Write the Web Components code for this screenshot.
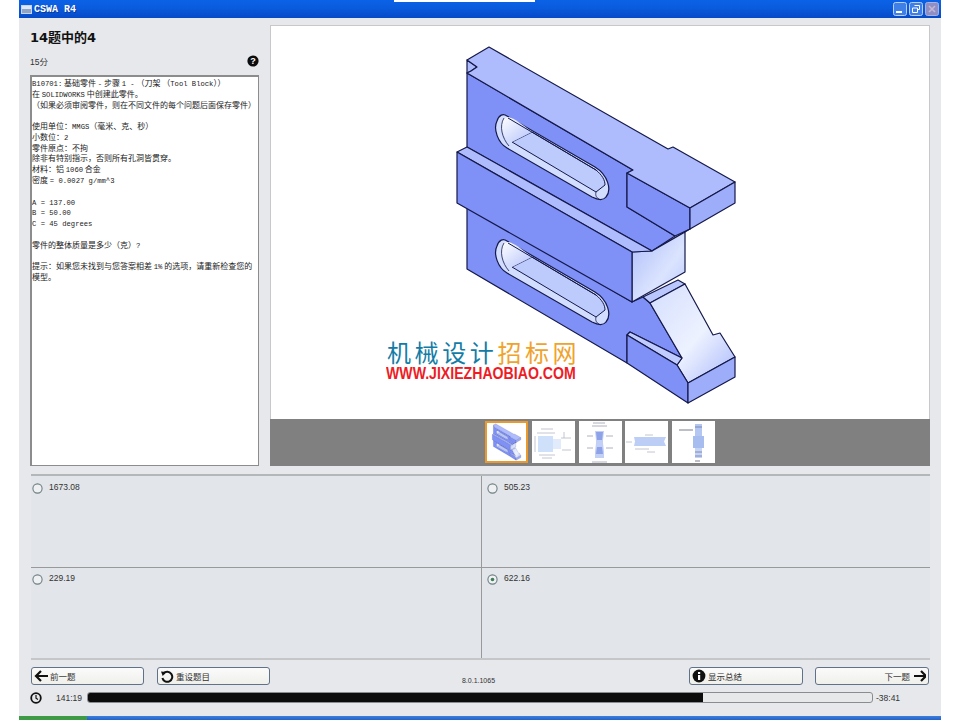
<!DOCTYPE html>
<html lang="zh">
<head>
<meta charset="utf-8">
<title>CSWA R4</title>
<style>
  html, body { margin: 0; padding: 0; background: #fff; }
</style>
</head>
<body>
<cswa-window>
  <cswa-titlebar slot="title">CSWA R4</cswa-titlebar>
  <cswa-question slot="question" heading="14题中的4" points="15分">
<div><i>B10701:</i> 基础零件 <i>-</i> 步骤 <i>1 -</i> （刀架 （<i>Tool Block</i>））</div>
<div>在 <i>SOLIDWORKS</i> 中创建此零件。</div>
<div>（如果必须审阅零件，则在不同文件的每个问题后面保存零件）</div>
<div>&nbsp;</div>
<div>使用单位：<i>MMGS</i>（毫米、克、秒）</div>
<div>小数位：<i>2</i></div>
<div>零件原点：不拘</div>
<div>除非有特别指示，否则所有孔洞皆贯穿。</div>
<div>材料：铝 <i>1060</i> 合金</div>
<div>密度 <i>= 0.0027 g/mm^3</i></div>
<div>&nbsp;</div>
<div><i>A = 137.00</i></div>
<div><i>B = 50.00</i></div>
<div><i>C = 45 degrees</i></div>
<div>&nbsp;</div>
<div>零件的整体质量是多少（克）<i>?</i></div>
<div>&nbsp;</div>
<div>提示：如果您未找到与您答案相差 <i>1%</i> 的选项，请重新检查您的</div>
<div>模型。</div>
  </cswa-question>
  <cswa-viewer slot="viewer"></cswa-viewer>
  <cswa-answers slot="answers">
    <cswa-option>1673.08</cswa-option>
    <cswa-option>505.23</cswa-option>
    <cswa-option>229.19</cswa-option>
    <cswa-option checked>622.16</cswa-option>
  </cswa-answers>
  <cswa-footer slot="footer">
    <cswa-button icon="back">前一题</cswa-button>
    <cswa-button icon="reset">重设题目</cswa-button>
    <span slot="version">8.0.1.1065</span>
    <cswa-button slot="right" icon="info">显示总结</cswa-button>
    <cswa-button slot="right" icon="next" trailing>下一题</cswa-button>
  </cswa-footer>
  <cswa-timer slot="timer" elapsed="141:19" left="-38:41" percent="78.4"></cswa-timer>
</cswa-window>

<script>
const cjk = '"Noto Sans CJK SC", sans-serif';

function slot(p) {
  return `<path d="M507 116 L595 167 C608 175 612 190 606 197 C603 201 598 200 592 197 L507 148 C498 143 493 129 497 121 C499 115 503 113 507 116Z" fill="#d3ddfd" stroke="#14194a" stroke-width="1.2"/>
    <path d="M512 142 L532 132 L596 170 C602 175 605 180 605 185 L596 192Z" fill="#bdcafc" stroke="#14194a" stroke-width="1"/>
    <path d="M504 118 C499 124 501 138 512 142 L532 132 C523 125 514 118 509 117Z" fill="url(#${p}g2)"/>
    <path d="M508 118 L596 170" fill="none" stroke="#14194a" stroke-width="1"/>
    <path d="M504 118 C499 126 502 138 509 146" fill="none" stroke="#14194a" stroke-width=".8"/>
    <path d="M596 192 C595 196 597 198 599 199" fill="none" stroke="#14194a" stroke-width=".8"/>`;
}

// the tool block, drawn in page coordinates
function part(p, viewBox) {
  return `<svg viewBox="${viewBox}" xmlns="http://www.w3.org/2000/svg" stroke-linejoin="round">
    <defs>
      <linearGradient id="${p}g1" x1="0" y1="0" x2="1" y2="1"><stop offset="0" stop-color="#aebcfb"/><stop offset=".6" stop-color="#dbe4fe"/><stop offset="1" stop-color="#b9c6fc"/></linearGradient>
      <linearGradient id="${p}g2" x1="0" y1="0" x2="1" y2="1"><stop offset="0" stop-color="#fff"/><stop offset="1" stop-color="#b5c3fb"/></linearGradient>
      <linearGradient id="${p}bg2" x1="0" y1="0" x2="1" y2="1"><stop offset="0" stop-color="#fff"/><stop offset="1" stop-color="#b5c3fb"/></linearGradient>
      <linearGradient id="${p}g3" x1="0" y1="0" x2="1" y2="1"><stop offset="0" stop-color="#d4defe"/><stop offset=".55" stop-color="#edf2ff"/><stop offset="1" stop-color="#a9b8fb"/></linearGradient>
    </defs>
    <g stroke="#14194a" stroke-width="1.2">
      <polygon points="467,205 632,302 643,297 650,303 682,358 630,332 627,335 627,363 467,269" fill="#7f90f6"/>
      <polygon points="643,297 678,280 685,284 650,303" fill="#b9c7fd"/>
      <polygon points="650,303 685,284 713,335 720,333 735,357 688,383 677,365 682,358" fill="url(#${p}g3)"/>
      <polygon points="630,332 682,358 677,365 627,335" fill="#c0ccfd"/>
      <polygon points="627,335 677,365 688,383 688,403 627,363" fill="#7f90f6"/>
      <polygon points="688,383 735,357 735,377 688,403" fill="#9eadfa"/>
      <polygon points="467,73 633,170 627,173 627,207 675,236 652,251 467,147" fill="#7f90f6"/>
      <polygon points="627,173 690,208 690,229 675,236 627,207" fill="#7f90f6"/>
      <polygon points="467,60 467,73 471,71 477,67" fill="#aebcfd"/>
      <polygon points="467,60 489,47 668,149 673,147 735,182 690,208 627,173 633,170 467,73 471,71 477,67" fill="#aebcfd"/>
      <polygon points="690,208 735,182 735,203 690,229" fill="#9eadfa"/>
      <polygon points="690,229 652,251 685,232" fill="#7f90f6"/>
      <polygon points="632,252 652,251 685,232 685,272 632,302" fill="url(#${p}g1)"/>
      <polygon points="457,152 467,147 652,251 632,252" fill="#aebcfd"/>
      <polygon points="457,152 632,252 632,302 457,203" fill="#7f90f6"/>
    </g>
    ${slot(p)}
    <g transform="translate(0 125)">${slot(p + "b")}</g>
  </svg>`;
}

const dim = 'fill="none" stroke="#b4b8c6" stroke-width=".8"';
const drawings = [
  `<rect x="6" y="15" width="15" height="16" fill="#cfe0fb"/><path d="M21 18h8v10h-8z" fill="#e2ebfc"/>
   <path d="M5 12h18M9 8h12M7 34h16M10 37h10M29 17h10M30 29h9M32 11v6M3 15v16" ${dim}/>`,
  `<path d="M16 10h9l-1 9v3l1 9v6h-9v-6l1-9v-3l-1-9z" fill="#c2cff6"/><path d="M17 11h7l-1 8h-5zM18 26h5l1 7h-7z" fill="#8ea2e8"/>
   <path d="M14 2h12M13 5h15M8 15h6M27 15h7M8 27h6M27 27h7M13 41h15" fill="none" stroke="#9ca0b0" stroke-width=".8"/>`,
  `<path d="M9 16h32l-2 4.500 2 4.500H9l1-4.500z" fill="#bccdf6"/>
   <path d="M1 21h6M20 14h8M10 28h14M22 31h8" ${dim}/>`,
  `<rect x="23" y="3" width="7" height="12" fill="#b4c6f2"/><rect x="21" y="15" width="11" height="12" fill="#a7bcef"/><rect x="23" y="27" width="7" height="10" fill="#c5d3f6"/>
   <path d="M23 6h7M23 31h7M23 35h7" stroke="#6f7aa0" stroke-width=".8" fill="none"/>
   <path d="M7 9h14M23 40h5" stroke="#7c7f8e" stroke-width="1.100" fill="none"/>`
];

class CswaWindow extends HTMLElement {
  connectedCallback() {
    const root = this.attachShadow({ mode: "open" });
    root.innerHTML = `
      <style>
        :host { display: block; width: 922px; height: 720px; margin-left: 19px; position: relative; }
        .frame { display: flex; flex-direction: column; height: 720px; background: #e6e8eb; }
        .top { display: flex; gap: 11px; padding: 7px 11px 0; height: 441px; }
        .notch { position: absolute; left: 375px; top: 0; width: 141px; height: 2px; background: #fff; }
        .task { margin-top: auto; height: 4px; display: flex; }
        .task b { width: 68px; background: #3f9a45; }
        .task span { flex: 1; background: linear-gradient(#3b7fdc, #2460c8); }
      </style>
      <div class="frame">
        <slot name="title"></slot>
        <div class="top">
          <slot name="question"></slot>
          <slot name="viewer"></slot>
        </div>
        <slot name="answers"></slot>
        <slot name="footer"></slot>
        <slot name="timer"></slot>
        <div class="task"><b></b><span></span></div>
      </div>
      <div class="notch"></div>`;
  }
}

class CswaTitlebar extends HTMLElement {
  connectedCallback() {
    const root = this.attachShadow({ mode: "open" });
    root.innerHTML = `
      <style>
        :host { display: flex; align-items: center; height: 18px; background: linear-gradient(#0b62e6, #0a5bdd 45%, #0549c8); color: #fff;
          font: bold 10px "Liberation Mono", monospace; }
        .app { width: 11px; height: 9px; margin: 0 2px 0 2px; background: linear-gradient(#dfe7f5 45%, #8fa5c8 45%); border: 1px solid #c8d4ea; box-sizing: border-box; }
        .txt { flex: 1; text-shadow: 1px 1px 0 #0a3a9a; }
        .btns { display: flex; gap: 2px; margin-right: 2px; }
        .btns svg { width: 14px; height: 14px; display: block; }
      </style>
      <span class="app"></span>
      <span class="txt"><slot></slot></span>
      <div class="btns">
        <svg viewBox="0 0 14 14"><rect x=".5" y=".5" width="13" height="13" rx="2" fill="#3f7fe8" stroke="#b8cef5"/><rect x="3" y="9" width="6" height="2" fill="#fff"/></svg>
        <svg viewBox="0 0 14 14"><rect x=".5" y=".5" width="13" height="13" rx="2" fill="#3f7fe8" stroke="#b8cef5"/><path d="M5.500 3.500h5v4h-2M3.500 6h5v4.500h-5z" fill="none" stroke="#fff"/></svg>
        <svg viewBox="0 0 14 14"><rect x=".5" y=".5" width="13" height="13" rx="2" fill="#8d8fc6" stroke="#a9b2dc"/><path d="M4 4l6 6M10 4l-6 6" stroke="#c4b7d4" stroke-width="1.600"/></svg>
      </div>`;
  }
}

class CswaQuestion extends HTMLElement {
  connectedCallback() {
    const root = this.attachShadow({ mode: "open" });
    root.innerHTML = `
      <style>
        :host { display: flex; flex-direction: column; width: 229px; flex: none; }
        h1 { margin: 0; padding-top: 5px; height: 15px; font: bold 13px/16px "DejaVu Sans", ${cjk}; color: #111; }
        .meta { display: flex; justify-content: space-between; align-items: center; margin-top: 9px; height: 14px; font: 8.500px "Liberation Sans", ${cjk}; color: #333; }
        .meta svg { width: 12px; height: 12px; }
        .box { flex: 1; margin-top: 7px; background: #fff; border: 1px solid #8c8c8c; border-width: 2px 1px 1px 2px; padding: 1px 0 0 0; font: 8px/10.780px ${cjk}; color: #222; white-space: nowrap; overflow: hidden; }
      </style>
      <h1>${this.getAttribute("heading")}</h1>
      <div class="meta"><span>${this.getAttribute("points")}</span>
        <svg viewBox="0 0 12 12"><circle cx="6" cy="6" r="5.600" fill="#0c0c0c"/><text x="6" y="9.200" text-anchor="middle" font-family="Liberation Sans" font-weight="700" font-size="9" fill="#fff">?</text></svg>
      </div>
      <div class="box"><slot></slot></div>`;
    // latin runs of the question text are a half-width mono
    this.querySelectorAll("i").forEach((el) => {
      el.style.cssText = 'font:7.200px "Liberation Mono",monospace';
    });
  }
}

class CswaViewer extends HTMLElement {
  connectedCallback() {
    const root = this.attachShadow({ mode: "open" });
    root.innerHTML = `
      <style>
        :host { display: flex; flex-direction: column; width: 660px; flex: none; }
        .stage { position: relative; height: 394px; background: #fff; border: 1px solid #c8c8c8; border-width: 1px 1px 0; box-sizing: border-box; overflow: hidden; }
        .stage > svg { display: block; width: 660px; height: 395px; margin-left: -1px; margin-top: -1px; }
        .mark { position: absolute; left: 116px; top: 314px; font: 24px/24px ${cjk}; letter-spacing: 3.600px; color: #137ca6; white-space: nowrap; }
        .mark span { color: #f0a32c; }
        .url { position: absolute; left: 115px; top: 340px; font: bold 17px/15px "Liberation Sans", sans-serif; color: #ee1c25; white-space: nowrap; transform: scaleX(.83); transform-origin: 0 50%; }
        .strip { flex: 1; background: #808080; display: flex; justify-content: center; gap: 3.750px; padding: 2px 0 2px; }
        .th { width: 43px; height: 42px; background: #fff; box-sizing: border-box; }
        .th svg { display: block; width: 100%; height: 100%; }
        .th.on { border: 2px solid #ea9a2c; }
      </style>
      <div class="stage">
        ${part("m", "270 25 660 395")}
        <div class="mark">机械设计<span>招标网</span></div>
        <div class="url">WWW.JIXIEZHAOBIAO.COM</div>
      </div>
      <div class="strip">
        <div class="th on">${part("t", "445 40 300 370")}</div>
        ${drawings.map((d) => `<div class="th"><svg viewBox="0 0 43 42">${d}</svg></div>`).join("")}
      </div>`;
  }
}

class CswaAnswers extends HTMLElement {
  connectedCallback() {
    const root = this.attachShadow({ mode: "open" });
    root.innerHTML = `
      <style>
        :host { display: block; margin: 8px 11px 0 12px; background: #e2e5e9; border-top: 2px solid #b4b7b9; border-bottom: 2px solid #c4c6c8; }
        .grid { display: grid; grid-template-columns: 451px 448px; grid-template-rows: 91px 91px; }
        ::slotted(cswa-option:nth-child(odd)) { border-right: 1px solid #999; padding-left: 1px; }
        ::slotted(cswa-option:nth-child(n+3)) { border-top: 1px solid #999; padding-top: 5px; }
      </style>
      <div class="grid"><slot></slot></div>`;
  }
}

class CswaOption extends HTMLElement {
  connectedCallback() {
    const on = this.hasAttribute("checked");
    const root = this.attachShadow({ mode: "open" });
    root.innerHTML = `
      <style>
        :host { display: flex; align-items: flex-start; gap: 6px; padding: 6px 0 0 5px; box-sizing: border-box; font: 8.500px/11px "Liberation Sans", sans-serif; color: #333; }
        svg { width: 11px; height: 11px; margin-top: 1px; flex: none; }
      </style>
      <svg viewBox="0 0 11 11"><circle cx="5.500" cy="5.500" r="4.600" fill="#eef0f2" stroke="#6f7f84" stroke-width="1.100"/>${on ? '<circle cx="5.500" cy="5.500" r="1.800" fill="#3f7d57"/>' : ""}</svg>
      <span><slot></slot></span>`;
  }
}

const icons = {
  back: `<path d="M7 2L2 7l5 5M2 7h12" fill="none" stroke="#111" stroke-width="2.200"/>`,
  next: `<path d="M9 2l5 5-5 5M14 7H2" fill="none" stroke="#111" stroke-width="2.200"/>`,
  reset: `<path d="M3.500 4.500A5 5 0 1 1 2.400 9" fill="none" stroke="#111" stroke-width="2"/><path d="M1 2.500l5.500.5-3.800 4z" fill="#111"/>`,
  info: `<circle cx="7" cy="7" r="6.400" fill="#111"/><rect x="6" y="6" width="2.200" height="5" fill="#fff"/><rect x="6" y="3" width="2.200" height="2" fill="#fff"/>`,
};

class CswaButton extends HTMLElement {
  connectedCallback() {
    const trailing = this.hasAttribute("trailing");
    const root = this.attachShadow({ mode: "open" });
    root.innerHTML = `
      <style>
        :host { display: flex; align-items: center; gap: 2px; width: 114px; height: 18px; box-sizing: border-box; padding: 0 2px 0 2px; border: 1px solid #5f7288; border-radius: 3px;
          background: linear-gradient(#fbfbfb, #efefeb); font: 8.500px ${cjk}; color: #333; justify-content: ${trailing ? "flex-end" : "flex-start"}; }
        svg { width: 14px; height: 14px; flex: none; }
      </style>
      ${trailing ? "<span><slot></slot></span>" : ""}
      <svg viewBox="0 0 14 14">${icons[this.getAttribute("icon")]}</svg>
      ${trailing ? "" : "<span><slot></slot></span>"}`;
  }
}

class CswaFooter extends HTMLElement {
  connectedCallback() {
    const root = this.attachShadow({ mode: "open" });
    root.innerHTML = `
      <style>
        :host { display: flex; align-items: center; margin: 7px 12px 0 12px; height: 18px; font: 7px "Liberation Sans", sans-serif; color: #333; }
        .group { display: flex; gap: 12px; }
        .group.left { gap: 13px; }
        .left ::slotted(cswa-button) { width: 113px; }
        .ver { flex: 1; text-align: center; padding: 8px 2px 0 0; }
      </style>
      <div class="group left"><slot></slot></div>
      <div class="ver"><slot name="version"></slot></div>
      <div class="group"><slot name="right"></slot></div>`;
  }
}

class CswaTimer extends HTMLElement {
  connectedCallback() {
    const root = this.attachShadow({ mode: "open" });
    root.innerHTML = `
      <style>
        :host { display: flex; align-items: center; margin: 6px 0 0 11px; height: 13px; font: 8.500px "Liberation Sans", sans-serif; color: #333; }
        svg { width: 12px; height: 12px; flex: none; }
        .el { margin-left: 14px; width: 31px; }
        .bar { width: 786px; height: 11px; box-sizing: border-box; border: 1px solid #8a8d90; border-radius: 3px; background: #e6e8ea; overflow: hidden; }
        .fill { height: 100%; background: #0c0c0c; }
        .left { margin-left: 3px; }
      </style>
      <svg viewBox="0 0 12 12"><circle cx="6" cy="6" r="4.800" fill="none" stroke="#111" stroke-width="1.800"/><path d="M6 3v3.200l2 1.200" fill="none" stroke="#111" stroke-width="1.200"/></svg>
      <span class="el">${this.getAttribute("elapsed")}</span>
      <div class="bar"><div class="fill" style="width:${this.getAttribute("percent")}%"></div></div>
      <span class="left">${this.getAttribute("left")}</span>`;
  }
}

customElements.define("cswa-window", CswaWindow);
customElements.define("cswa-titlebar", CswaTitlebar);
customElements.define("cswa-question", CswaQuestion);
customElements.define("cswa-viewer", CswaViewer);
customElements.define("cswa-answers", CswaAnswers);
customElements.define("cswa-option", CswaOption);
customElements.define("cswa-button", CswaButton);
customElements.define("cswa-footer", CswaFooter);
customElements.define("cswa-timer", CswaTimer);
</script>
</body>
</html>
